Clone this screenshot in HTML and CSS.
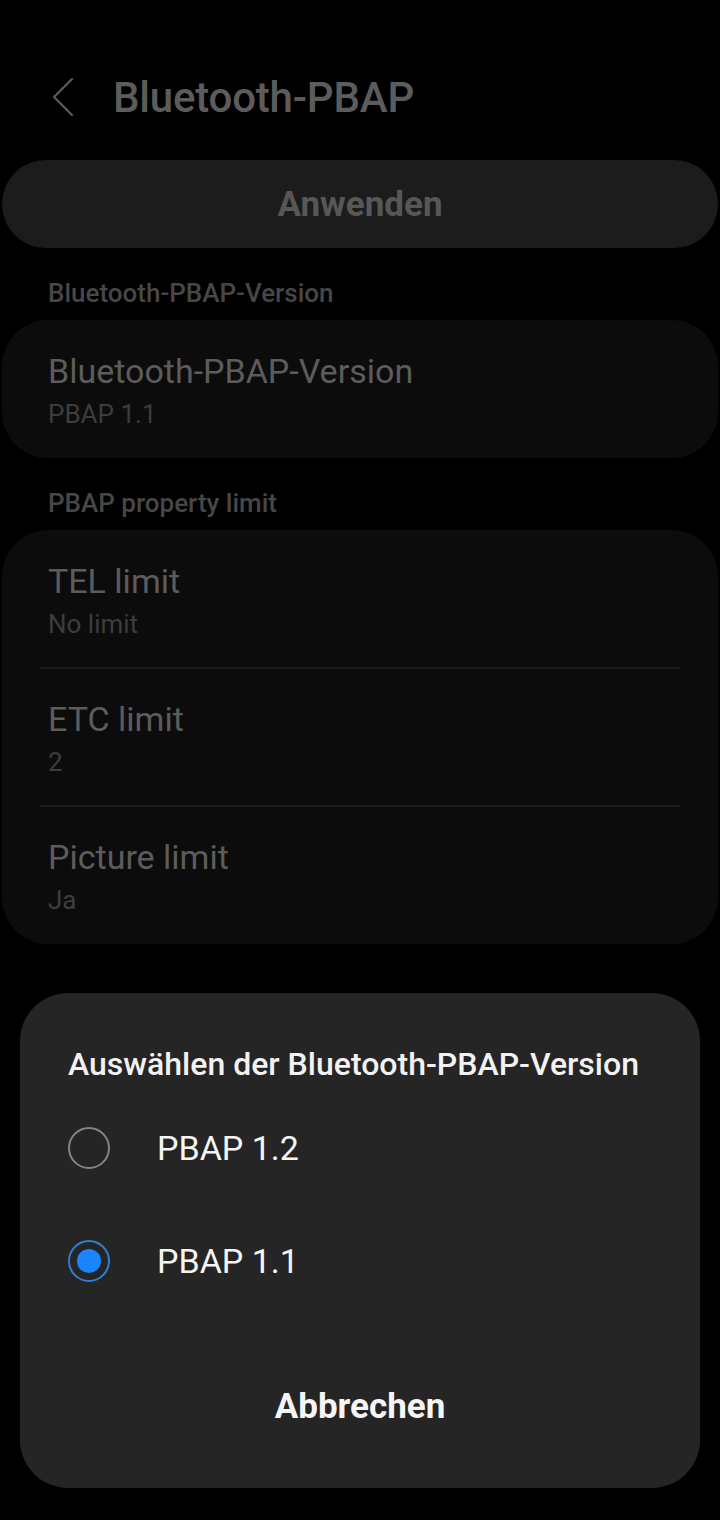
FILE: index.html
```html
<!DOCTYPE html>
<html lang="de">
<head>
  <meta charset="UTF-8">
  <meta name="viewport" content="width=device-width, initial-scale=1.0">
  <title>Bluetooth-PBAP</title>
  <link rel="stylesheet" href="styles.css">
</head>
<body>
  <div class="screen">
    <header class="app-bar">
      <svg class="back-icon" width="26" height="44" viewBox="0 0 26 44">
        <polyline points="22,4 4,22 22,40" fill="none" stroke="currentColor" stroke-width="2.2" stroke-linecap="round" stroke-linejoin="round"/>
      </svg>
      <h1>Bluetooth-PBAP</h1>
    </header>

    <button class="apply-btn" type="button">Anwenden</button>

    <p class="section-label">Bluetooth-PBAP-Version</p>
    <div class="card">
      <div class="row">
        <div class="row-title">Bluetooth-PBAP-Version</div>
        <div class="row-sub">PBAP 1.1</div>
      </div>
    </div>

    <p class="section-label">PBAP property limit</p>
    <div class="card">
      <div class="row">
        <div class="row-title">TEL limit</div>
        <div class="row-sub">No limit</div>
      </div>
      <div class="divider"></div>
      <div class="row">
        <div class="row-title">ETC limit</div>
        <div class="row-sub">2</div>
      </div>
      <div class="divider"></div>
      <div class="row">
        <div class="row-title">Picture limit</div>
        <div class="row-sub">Ja</div>
      </div>
    </div>
  </div>

  <div class="dialog">
    <h2>Auswählen der Bluetooth-PBAP-Version</h2>
    <div class="option">
      <span class="radio"></span>
      <span class="option-label">PBAP 1.2</span>
    </div>
    <div class="option">
      <span class="radio checked"></span>
      <span class="option-label">PBAP 1.1</span>
    </div>
    <div class="dialog-actions">
      <button class="cancel-btn" type="button">Abbrechen</button>
    </div>
  </div>
</body>
</html>
```

FILE: styles.css
```css
* {
  box-sizing: border-box;
}
body {
  margin: 0;
  background: #000;
  font-family: Roboto, "Noto Sans", sans-serif;
  width: 720px;
  height: 1520px;
  overflow: hidden;
}
.screen {
  padding: 0 2px;
}
.app-bar {
  display: flex;
  align-items: center;
  height: 154px;
  padding: 40px 0 0 48px;
  margin-bottom: 6px;
}
.back-icon {
  color: #5a5a5a;
  margin-right: 37px;
}
.app-bar h1 {
  margin: 0;
  font-size: 42px;
  font-weight: 500;
  color: #5c5c5c;
  letter-spacing: -0.2px;
}
.apply-btn {
  display: block;
  width: 100%;
  height: 88px;
  border: none;
  border-radius: 44px;
  background: #1c1c1c;
  color: #575757;
  font-family: inherit;
  font-size: 35px;
  font-weight: 700;
  margin-bottom: 30px;
}
.section-label {
  margin: 0 0 12px 46px;
  font-size: 26px;
  font-weight: 500;
  color: #474747;
  line-height: 30px;
}
.card {
  background: #0c0c0c;
  border-radius: 46px;
  margin-bottom: 30px;
}
.row {
  height: 138px;
  padding: 30px 46px 0;
}
.row-title {
  font-size: 34px;
  color: #5c5c5c;
  line-height: 42px;
}
.row-sub {
  font-size: 26px;
  color: #3d3d3d;
  line-height: 30px;
  margin-top: 7px;
}
.divider {
  height: 2px;
  margin: -1px 38px -1px;
  background: #1a1a1a;
}
.dialog {
  position: absolute;
  left: 20px;
  top: 993px;
  width: 680px;
  height: 495px;
  background: #252525;
  border-radius: 48px;
  padding: 49px 0 0 48px;
}
.dialog h2 {
  margin: 0 0 5px;
  font-size: 32px;
  font-weight: 500;
  color: #f2f2f2;
  line-height: 44px;
}
.option {
  display: flex;
  align-items: center;
  height: 113px;
}
.radio {
  width: 42px;
  height: 42px;
  border-radius: 50%;
  border: 2px solid #858585;
  margin-right: 47px;
  display: flex;
  align-items: center;
  justify-content: center;
}
.radio.checked {
  border: 2.5px solid #2f80d8;
}
.radio.checked::after {
  content: "";
  width: 24px;
  height: 24px;
  border-radius: 50%;
  background: #1a85ff;
}
.option-label {
  font-size: 34px;
  color: #f5f5f5;
}
.dialog-actions {
  display: flex;
  justify-content: center;
  padding: 69px 48px 0 0;
}
.cancel-btn {
  border: none;
  background: none;
  color: #f5f5f5;
  font-family: inherit;
  font-size: 35px;
  font-weight: 700;
  padding: 0;
}
```
